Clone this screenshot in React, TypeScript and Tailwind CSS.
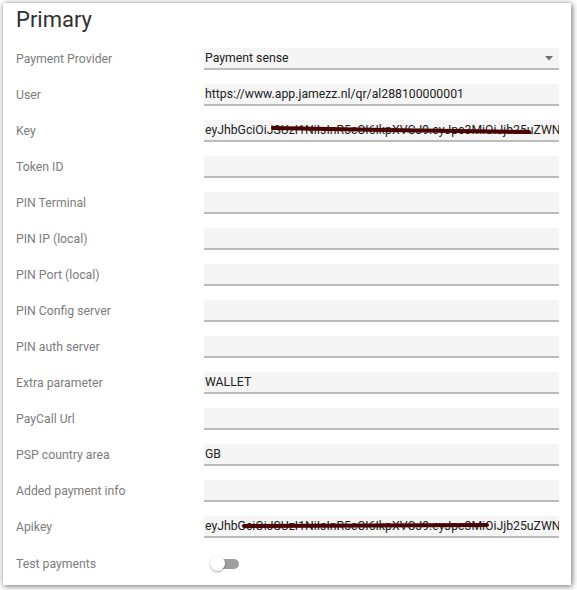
import React from "react";

const jwt = "eyJhbGciOiJSUzI1NiIsInR5cCI6IkpXVCJ9.eyJpc3MiOiJjb25uZWN0aW9uIjoiMSJ9";

interface Field {
  label: string;
  value?: string;
  select?: boolean;
  strike?: { d: string };
}

const fields: Field[] = [
  { label: "Payment Provider", value: "Payment sense", select: true },
  { label: "User", value: "https://www.app.jamezz.nl/qr/al288100000001" },
  { label: "Key", value: jwt, strike: { d: "M69 8 C 150 10, 250 11, 325 12" } },
  { label: "Token ID" },
  { label: "PIN Terminal" },
  { label: "PIN IP (local)" },
  { label: "PIN Port (local)" },
  { label: "PIN Config server" },
  { label: "PIN auth server" },
  { label: "Extra parameter", value: "WALLET" },
  { label: "PayCall Url" },
  { label: "PSP country area", value: "GB" },
  { label: "Added payment info" },
  { label: "Apikey", value: jwt, strike: { d: "M40 10 C 120 10, 200 9, 283 9" } },
];

const Row = ({ field }: { field: Field }) => {
  return (
    <div className="flex items-center h-[36px]">
      <div className="w-[188px] text-[12.25px] text-[#7d7d7d]">{field.label}</div>
      <div className="relative w-[355px] h-[22px] bg-[#f5f5f5] border-b-2 border-[#bcbcbc] flex items-center pl-[1px] overflow-hidden">
        <span className="text-[12.25px] text-[#222] whitespace-nowrap">{field.value}</span>
        {field.select && (
          <svg className="absolute right-[6px] top-[8px]" width="8" height="5" viewBox="0 0 8 5">
            <path d="M0 0 L8 0 L4 4.5 Z" fill="#707070" />
          </svg>
        )}
        {field.strike && (
          <svg className="absolute left-0 top-0" width="355" height="20" viewBox="0 0 355 20">
            <path d={field.strike.d} stroke="#4a0303" strokeWidth="4" strokeLinecap="round" fill="none" />
          </svg>
        )}
      </div>
    </div>
  );
};

export default function App() {
  return (
    <div className="w-[577px] h-[590px] bg-white pt-[3px] pl-[3px]" style={{ fontFamily: "Roboto, 'Liberation Sans', sans-serif" }}>
      <div className="w-[568px] h-[582px] bg-white shadow-[1px_1px_6px_rgba(0,0,0,0.6)] pl-[13px] pt-[4px]">
        <h1 className="text-[22px] leading-[26px] text-[#303030] mb-[8px]">Primary</h1>
        {fields.map((f) => (
          <Row key={f.label} field={f} />
        ))}
        <div className="flex items-center h-[38px]">
          <div className="w-[188px] text-[12.25px] text-[#7d7d7d]">Test payments</div>
          <div className="relative w-[36px] h-[16px] ml-[2px]">
            <div className="absolute left-[6px] top-[3px] w-[27px] h-[10px] rounded-full bg-[#9e9e9e]" />
            <div className="absolute left-[4px] top-0 w-[15px] h-[15px] rounded-full bg-white shadow-[0_1px_2px_rgba(0,0,0,0.35)]" />
          </div>
        </div>
      </div>
    </div>
  );
}
